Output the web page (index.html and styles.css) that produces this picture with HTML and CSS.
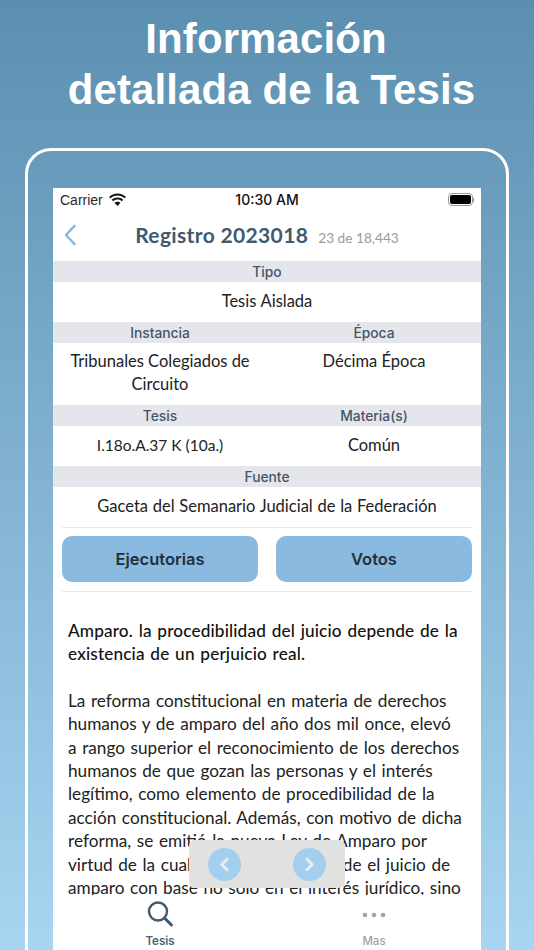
FILE: index.html
```html
<!DOCTYPE html>
<html lang="es">
<head>
<meta charset="utf-8">
<title>Información detallada de la Tesis</title>
<link rel="stylesheet" href="styles.css">
</head>
<body>
<div class="page">
  <h1 class="headline"><span class="headline-first">Información</span><br>detallada de la Tesis</h1>
  <div class="device">
    <div class="screen">
      <div class="status">
        <div class="status-left">
          <span>Carrier</span>
          <svg class="wifi" viewBox="0 0 18 13" width="19" height="14"><path d="M9 2.200c2.600 0 5 1 6.800 2.700l1.200-1.300C14.900 1.500 12.100.3 9 .3S3.100 1.500 1 3.600l1.200 1.300C4 3.200 6.400 2.200 9 2.200z"/><path d="M9 6c1.600 0 3.100.6 4.200 1.700l1.300-1.400C13 4.900 11.100 4.100 9 4.100s-4 .8-5.500 2.200l1.300 1.400C5.900 6.600 7.400 6 9 6z"/><path d="M9 8.100c-1.100 0-2 .4-2.800 1.100L9 12.300l2.800-3.100C11 8.500 10.100 8.100 9 8.100z"/></svg>
        </div>
        <span class="clock">10:30 AM</span>
        <div class="battery"><span class="battery-body"><span class="battery-fill"></span></span><span class="battery-cap"></span></div>
      </div>
      <div class="nav">
        <svg class="back" viewBox="0 0 14 24" width="14" height="22"><path d="M12 2 2.500 12 12 22" fill="none" stroke="#84b6de" stroke-width="2.600" stroke-linecap="round" stroke-linejoin="round"/></svg>
        <div class="nav-title"><span class="registro">Registro 2023018</span><span class="count">23 de 18,443</span></div>
      </div>
      <div class="band">Tipo</div>
      <div class="value">Tesis Aislada</div>
      <div class="band band-two"><span>Instancia</span><span>Época</span></div>
      <div class="value-two value-tall"><span>Tribunales Colegiados de Circuito</span><span>Décima Época</span></div>
      <div class="band band-two"><span>Tesis</span><span>Materia(s)</span></div>
      <div class="value-two value-short"><span class="tesis-code">I.18o.A.37 K (10a.)</span><span>Común</span></div>
      <div class="band">Fuente</div>
      <div class="value">Gaceta del Semanario Judicial de la Federación</div>
      <div class="actions">
        <button class="action">Ejecutorias</button>
        <button class="action">Votos</button>
      </div>
      <div class="article">
        <p class="lead">Amparo. la procedibilidad del juicio depende de la existencia de un perjuicio real.</p>
        <p>La reforma constitucional en materia de derechos<br>humanos y de amparo del año dos mil once, elevó<br>a rango superior el reconocimiento de los derechos<br>humanos de que gozan las personas y el interés<br>legítimo, como elemento de procedibilidad de la<br>acción constitucional. Además, con motivo de dicha<br>reforma, se emitió la nueva Ley de Amparo por<br>virtud de la cual se prevé que procede el juicio de<br>amparo con base no solo en el interés jurídico, sino</p>
        <div class="pager">
          <span class="pager-btn"><svg viewBox="0 0 12 16" width="11" height="15"><path d="M9 2 3 8l6 6" fill="none" stroke="#e6eef4" stroke-width="3" stroke-linecap="round" stroke-linejoin="round"/></svg></span>
          <span class="pager-btn"><svg viewBox="0 0 12 16" width="11" height="15"><path d="M3 2l6 6-6 6" fill="none" stroke="#e6eef4" stroke-width="3" stroke-linecap="round" stroke-linejoin="round"/></svg></span>
        </div>
      </div>
      <div class="tabs">
        <div class="tab tab-active">
          <svg viewBox="0 0 28 28" width="28" height="28"><circle cx="12" cy="11.500" r="9" fill="none" stroke="#3f5a70" stroke-width="2.400"/><path d="M18.500 18l7 7" stroke="#3f5a70" stroke-width="3" stroke-linecap="round"/></svg>
          <span>Tesis</span>
        </div>
        <div class="tab">
          <svg viewBox="0 0 28 28" width="28" height="28"><circle cx="5" cy="15" r="2.300" fill="#a3a3a3"/><circle cx="14" cy="15" r="2.300" fill="#a3a3a3"/><circle cx="23" cy="15" r="2.300" fill="#a3a3a3"/></svg>
          <span>Mas</span>
        </div>
      </div>
    </div>
  </div>
</div>
</body>
</html>
```
FILE: styles.css
```css
* { box-sizing: border-box; }
html, body { margin: 0; padding: 0; }
.page {
  width: 534px;
  height: 950px;
  overflow: hidden;
  background: linear-gradient(180deg, #5b8fb0 0%, #a7d5f2 100%);
  font-family: "Lato", "Open Sans", sans-serif;
  color: #222;
  padding-top: 13px;
}
.headline {
  margin: 0;
  padding-left: 9px;
  text-align: center;
  font-family: "Liberation Sans", Arial, sans-serif;
  font-weight: 700;
  font-size: 42px;
  line-height: 51px;
  color: #fff;
  height: 135px;
  letter-spacing: 0.1px;
}
.headline-first { padding-right: 11px; }
.device {
  margin: 0 25px;
  height: 840px;
  border: 3px solid #fff;
  border-radius: 26px 26px 0 0;
  padding: 37px 25px 0;
}
.screen {
  background: #fff;
  height: 762px;
  display: flex;
  flex-direction: column;
}
.status {
  height: 23px;
  display: flex;
  align-items: center;
  justify-content: space-between;
  padding: 0 7px;
  position: relative;
  font-family: "Liberation Sans", Arial, sans-serif;
  font-size: 14px;
  color: #2a2a2a;
}
.status-left { display: flex; align-items: center; gap: 5px; }
.wifi { fill: #111; }
.clock {
  position: absolute;
  left: 0;
  right: 0;
  text-align: center;
  font-family: "Inter", sans-serif;
  font-size: 14px;
  font-weight: 500;
  color: #111;
}
.battery { display: flex; align-items: center; }
.battery-body {
  width: 25px;
  height: 13px;
  border: 1px solid #999;
  border-radius: 4px;
  padding: 1px;
  display: block;
}
.battery-fill { display: block; height: 100%; background: #000; border-radius: 2px; }
.battery-cap { width: 1px; height: 4px; background: #999; }
.nav {
  height: 50px;
  position: relative;
  display: flex;
  align-items: center;
  justify-content: center;
  padding-bottom: 3px;
}
.back { position: absolute; left: 10px; top: 13px; }
.nav-title { display: flex; align-items: baseline; gap: 10px; }
.registro { font-size: 21px; font-weight: 700; color: #405a70; letter-spacing: 0.35px; }
.count { font-size: 13.700px; color: #9a9a9a; }
.band {
  background: #e5e5ec;
  height: 21px;
  font-family: "Inter", sans-serif;
  font-size: 13.800px;
  font-weight: 500;
  line-height: 22px;
  text-align: center;
  color: #46566a;
}
.band-two, .value-two {
  display: grid;
  grid-template-columns: 214px 214px;
}
.value {
  height: 40px;
  line-height: 38px;
  text-align: center;
  font-size: 16.500px;
  word-spacing: 0.500px;
}
.value-two {
  text-align: center;
  font-size: 16.500px;
  line-height: 23px;
}
.value-two span:first-child { padding: 0 6px 0 6px; }
.value-tall { height: 62px; padding-top: 7px; }
.value-short { height: 40px; padding-top: 8px; }
.value-short .tesis-code { font-size: 15.500px; }
.actions {
  margin: 0 9px;
  padding: 8px 0;
  border-top: 1px solid #e8e8e8;
  border-bottom: 1px solid #e8e8e8;
  display: flex;
  justify-content: space-between;
  height: 65px;
}
.action {
  width: 196px;
  height: 46px;
  border: 0;
  border-radius: 10px;
  background: #8abae0;
  color: #22303d;
  font-family: "Inter", sans-serif;
  font-weight: 600;
  font-size: 16.500px;
  padding: 0;
}
.article {
  flex: 1;
  min-height: 0;
  position: relative;
  overflow: hidden;
  padding: 27px 15px 0;
  font-size: 17.200px;
  line-height: 23.400px;
  word-spacing: 1.200px;
  color: #222;
}
.article p { margin: 0 0 24px; white-space: nowrap; }
.article .lead { white-space: normal; color: #111; font-weight: 500; letter-spacing: 0.15px; margin-bottom: 23px; }
.pager {
  position: absolute;
  left: 136px;
  top: 248px;
  width: 156px;
  height: 48px;
  background: #e1e1e1;
  border-radius: 6px;
  display: flex;
  justify-content: space-between;
  padding: 8px 19px;
}
.pager-btn {
  width: 33px;
  height: 33px;
  border-radius: 50%;
  background: #a3cfee;
  display: flex;
  align-items: center;
  justify-content: center;
}
.tabs {
  height: 55px;
  background: #fff;
  display: grid;
  grid-template-columns: 214px 214px;
  flex: none;
}
.tab {
  display: flex;
  flex-direction: column;
  align-items: center;
  font-family: "Inter", sans-serif;
  font-size: 11.500px;
  font-weight: 500;
  color: #a3a3a3;
  padding-top: 5px;
  gap: 6px;
}
.tab-active { color: #4b6478; font-weight: 600; }
```
